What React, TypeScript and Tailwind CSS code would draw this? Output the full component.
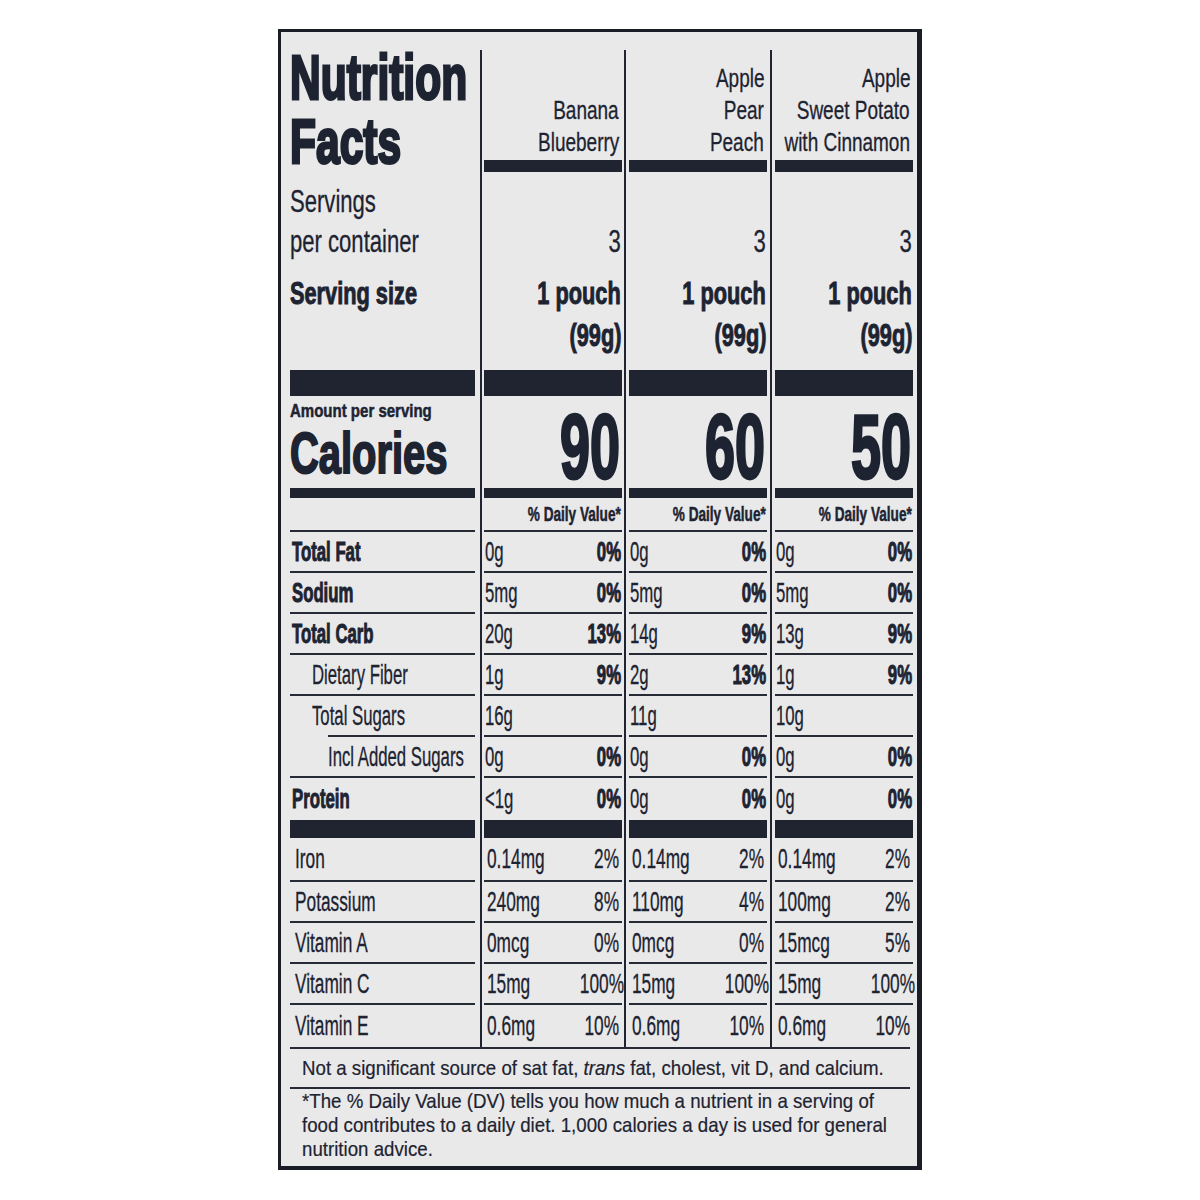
import React from "react";

type N = React.ReactNode;

function L({ c, children }: { c: string; children: N }) {
  return <div className={`whitespace-nowrap origin-left ${c}`}>{children}</div>;
}

function R({ c, children }: { c: string; children: N }) {
  return (
    <div className="flex justify-end">
      <div className={`whitespace-nowrap origin-right shrink-0 ${c}`}>{children}</div>
    </div>
  );
}

function Row({ h, label, cells }: { h: string; label: N; cells: [N, N, N] }) {
  return (
    <div className={`flex ${h}`}>
      <div className="w-[185px] mr-[5px] h-full">{label}</div>
      <div className="border-l-2 border-[#1f2430] pl-[2px] pr-[2px] h-full">
        <div className="w-[138px] h-full">{cells[0]}</div>
      </div>
      <div className="border-l-2 border-[#1f2430] pl-[3px] pr-[3px] h-full">
        <div className="w-[138px] h-full">{cells[1]}</div>
      </div>
      <div className="border-l-2 border-[#1f2430] pl-[3px] h-full">
        <div className="w-[138px] h-full">{cells[2]}</div>
      </div>
    </div>
  );
}

const Bar = () => <div className="h-full bg-[#1f2430]" />;
const Line = () => <div className="h-[2px] bg-[#262b36] shrink-0" />;

function HeadCell({ lines }: { lines: string[] }) {
  return (
    <div className="h-full flex flex-col justify-end">
      <div className="pr-[3px]">
        {lines.map((t) => (
          <R key={t} c="text-[26px] leading-[32px] scale-x-[0.73] [-webkit-text-stroke:0.3px_#1d2331]">
            {t}
          </R>
        ))}
      </div>
      <div className="h-[12px] mt-[2px] bg-[#1f2430]" />
    </div>
  );
}

function ServCell() {
  return (
    <div className="h-full flex flex-col pt-[49px] pr-[1px]">
      <R c="text-[32px] leading-[40px] scale-x-[0.69] [-webkit-text-stroke:0.3px_#1d2331]">3</R>
      <div className="h-[11px]" />
      <R c="text-[32px] leading-[42px] font-bold scale-x-[0.68] [-webkit-text-stroke:1px_#1d2331]">1 pouch</R>
      <R c="text-[32px] leading-[42px] font-bold scale-x-[0.68] [-webkit-text-stroke:1px_#1d2331]">(99g)</R>
    </div>
  );
}

function CalCell({ v }: { v: string }) {
  return (
    <div className="h-full pt-[6px] pr-[2px]">
      <R c="text-[90px] leading-[90px] font-bold scale-x-[0.6] [-webkit-text-stroke:3px_#1d2331]">{v}</R>
    </div>
  );
}

function DVCell() {
  return (
    <div className="h-full flex flex-col">
      <div className="flex-1 flex items-center justify-end pr-[1px]">
        <div className="whitespace-nowrap origin-right shrink-0 text-[20px] leading-[20px] font-bold scale-x-[0.68] [-webkit-text-stroke:0.5px_#1d2331]">
          % Daily Value*
        </div>
      </div>
      <Line />
    </div>
  );
}

function ValCell({
  v,
  p,
  line,
  pBold,
  sc,
  px,
}: {
  v: string;
  p: string;
  line: boolean;
  pBold: boolean;
  sc: string;
  px: string;
}) {
  return (
    <div className="h-full flex flex-col">
      <div className={`flex-1 flex items-center justify-between ${px}`}>
        <div className={`whitespace-nowrap origin-left shrink-0 text-[27px] leading-[30px] ${sc} [-webkit-text-stroke:0.3px_#1d2331]`}>{v}</div>
        <div
          className={`whitespace-nowrap origin-right shrink-0 text-[27px] leading-[30px] ${sc} ${
            pBold ? "font-bold [-webkit-text-stroke:1px_#1d2331]" : "[-webkit-text-stroke:0.3px_#1d2331]"
          }`}
        >
          {p}
        </div>
      </div>
      {line && <Line />}
    </div>
  );
}

type NutRow = {
  label: string;
  bold: boolean;
  pl: string;
  h: string;
  line: boolean;
  lineIndent?: boolean;
  v: [string, string][];
};

const nutrients: NutRow[] = [
  { label: "Total Fat", bold: true, pl: "pl-[2px]", h: "h-[41px]", line: true, v: [["0g", "0%"], ["0g", "0%"], ["0g", "0%"]] },
  { label: "Sodium", bold: true, pl: "pl-[2px]", h: "h-[41px]", line: true, v: [["5mg", "0%"], ["5mg", "0%"], ["5mg", "0%"]] },
  { label: "Total Carb", bold: true, pl: "pl-[2px]", h: "h-[41px]", line: true, v: [["20g", "13%"], ["14g", "9%"], ["13g", "9%"]] },
  { label: "Dietary Fiber", bold: false, pl: "pl-[22px]", h: "h-[41px]", line: true, v: [["1g", "9%"], ["2g", "13%"], ["1g", "9%"]] },
  { label: "Total Sugars", bold: false, pl: "pl-[22px]", h: "h-[41px]", line: true, lineIndent: true, v: [["16g", ""], ["11g", ""], ["10g", ""]] },
  { label: "Incl Added Sugars", bold: false, pl: "pl-[38px]", h: "h-[41px]", line: true, v: [["0g", "0%"], ["0g", "0%"], ["0g", "0%"]] },
  { label: "Protein", bold: true, pl: "pl-[2px]", h: "h-[42px]", line: false, v: [["<1g", "0%"], ["0g", "0%"], ["0g", "0%"]] },
];

const vitamins: NutRow[] = [
  { label: "Iron", bold: false, pl: "pl-[5px]", h: "h-[44px]", line: true, v: [["0.14mg", "2%"], ["0.14mg", "2%"], ["0.14mg", "2%"]] },
  { label: "Potassium", bold: false, pl: "pl-[5px]", h: "h-[41px]", line: true, v: [["240mg", "8%"], ["110mg", "4%"], ["100mg", "2%"]] },
  { label: "Vitamin A", bold: false, pl: "pl-[5px]", h: "h-[41px]", line: true, v: [["0mcg", "0%"], ["0mcg", "0%"], ["15mcg", "5%"]] },
  { label: "Vitamin C", bold: false, pl: "pl-[5px]", h: "h-[41px]", line: true, v: [["15mg", "100%"], ["15mg", "100%"], ["15mg", "100%"]] },
  { label: "Vitamin E", bold: false, pl: "pl-[5px]", h: "h-[42px]", line: false, v: [["0.6mg", "10%"], ["0.6mg", "10%"], ["0.6mg", "10%"]] },
];

function NutrientRow({ r, vit }: { r: NutRow; vit: boolean }) {
  const sc = vit ? "scale-x-[0.64]" : "scale-x-[0.62]";
  const label = (
    <div className="h-full flex flex-col">
      <div className={`flex-1 flex items-center ${r.pl}`}>
        <div
          className={`whitespace-nowrap origin-left text-[27px] leading-[30px] ${sc} ${
            r.bold ? "font-bold [-webkit-text-stroke:1px_#1d2331]" : "[-webkit-text-stroke:0.3px_#1d2331]"
          }`}
        >
          {r.label}
        </div>
      </div>
      {r.line && (r.lineIndent ? <div className="h-[2px] ml-[38px] bg-[#262b36]" /> : <Line />)}
    </div>
  );
  const cells = r.v.map(([v, p], i) => (
    <ValCell key={i} v={v} p={p} line={r.line} pBold={!vit} sc={sc} px={vit ? "pl-[3px] pr-[3px]" : "pl-[1px] pr-[1px]"} />
  )) as [N, N, N];
  return <Row h={r.h} label={label} cells={cells} />;
}

export default function App() {
  return (
    <div className="w-[1200px] h-[1200px] bg-white pt-[29px] pl-[278px] font-['Liberation_Sans',Arial,sans-serif] text-[#1d2331]">
      <div className="w-[644px] h-[1141px] border-l-[3px] border-t-[3px] border-r-[5px] border-b-[4px] border-[#1a1d25] bg-[#e9e9e9] pt-[18px] pl-[9px]">
        {/* Header */}
        <Row
          h="h-[122px]"
          label={
            <div className="h-full flex flex-col justify-end">
              <L c="text-[63px] leading-[64px] font-bold scale-x-[0.675] [-webkit-text-stroke:3px_#1d2331]">Nutrition</L>
              <L c="text-[63px] leading-[64px] font-bold scale-x-[0.675] [-webkit-text-stroke:3px_#1d2331]">Facts</L>
              <div className="h-[2px] mt-[-1px] bg-[#262b36]" />
            </div>
          }
          cells={[
            <HeadCell lines={["Banana", "Blueberry"]} />,
            <HeadCell lines={["Apple", "Pear", "Peach"]} />,
            <HeadCell lines={["Apple", "Sweet Potato", "with Cinnamon"]} />,
          ]}
        />
        {/* Servings */}
        <Row
          h="h-[198px]"
          label={
            <div className="h-full flex flex-col pt-[9px]">
              <L c="text-[32px] leading-[40px] scale-x-[0.69] [-webkit-text-stroke:0.3px_#1d2331]">Servings</L>
              <L c="text-[32px] leading-[40px] scale-x-[0.69] [-webkit-text-stroke:0.3px_#1d2331]">per container</L>
              <div className="h-[11px]" />
              <L c="text-[32px] leading-[42px] font-bold scale-x-[0.68] [-webkit-text-stroke:1px_#1d2331]">Serving size</L>
            </div>
          }
          cells={[<ServCell />, <ServCell />, <ServCell />]}
        />
        <Row h="h-[26px]" label={<Bar />} cells={[<Bar />, <Bar />, <Bar />]} />
        {/* Calories */}
        <Row
          h="h-[92px]"
          label={
            <div className="h-full flex flex-col pt-[5px]">
              <L c="text-[19px] leading-[19px] font-bold scale-x-[0.79] [-webkit-text-stroke:0.5px_#1d2331]">Amount per serving</L>
              <div className="h-[5px]" />
              <L c="text-[57px] leading-[57px] font-bold scale-x-[0.70] [-webkit-text-stroke:2px_#1d2331]">Calories</L>
            </div>
          }
          cells={[<CalCell v="90" />, <CalCell v="60" />, <CalCell v="50" />]}
        />
        <Row h="h-[10px]" label={<Bar />} cells={[<Bar />, <Bar />, <Bar />]} />
        <Row
          h="h-[34px]"
          label={
            <div className="h-full flex flex-col justify-end">
              <Line />
            </div>
          }
          cells={[<DVCell />, <DVCell />, <DVCell />]}
        />
        {nutrients.map((r) => (
          <NutrientRow key={r.label} r={r} vit={false} />
        ))}
        <Row h="h-[18px]" label={<Bar />} cells={[<Bar />, <Bar />, <Bar />]} />
        {vitamins.map((r) => (
          <NutrientRow key={r.label} r={r} vit={true} />
        ))}
        {/* Footer */}
        <div className="w-[620px]">
          <Line />
          <div className="h-[38px] flex items-center pl-[12px]">
            <L c="text-[21px] leading-[24px] scale-x-[0.89] [-webkit-text-stroke:0.2px_#1d2331]">
              Not a significant source of sat fat, <i>trans</i> fat, cholest, vit D, and calcium.
            </L>
          </div>
          <Line />
          <div className="pl-[12px]">
            <L c="text-[21px] leading-[24px] scale-x-[0.89] [-webkit-text-stroke:0.2px_#1d2331]">
              *The % Daily Value (DV) tells you how much a nutrient in a serving of
            </L>
            <L c="text-[21px] leading-[24px] scale-x-[0.89] [-webkit-text-stroke:0.2px_#1d2331]">
              food contributes to a daily diet. 1,000 calories a day is used for general
            </L>
            <L c="text-[21px] leading-[24px] scale-x-[0.89] [-webkit-text-stroke:0.2px_#1d2331]">nutrition advice.</L>
          </div>
        </div>
      </div>
    </div>
  );
}
